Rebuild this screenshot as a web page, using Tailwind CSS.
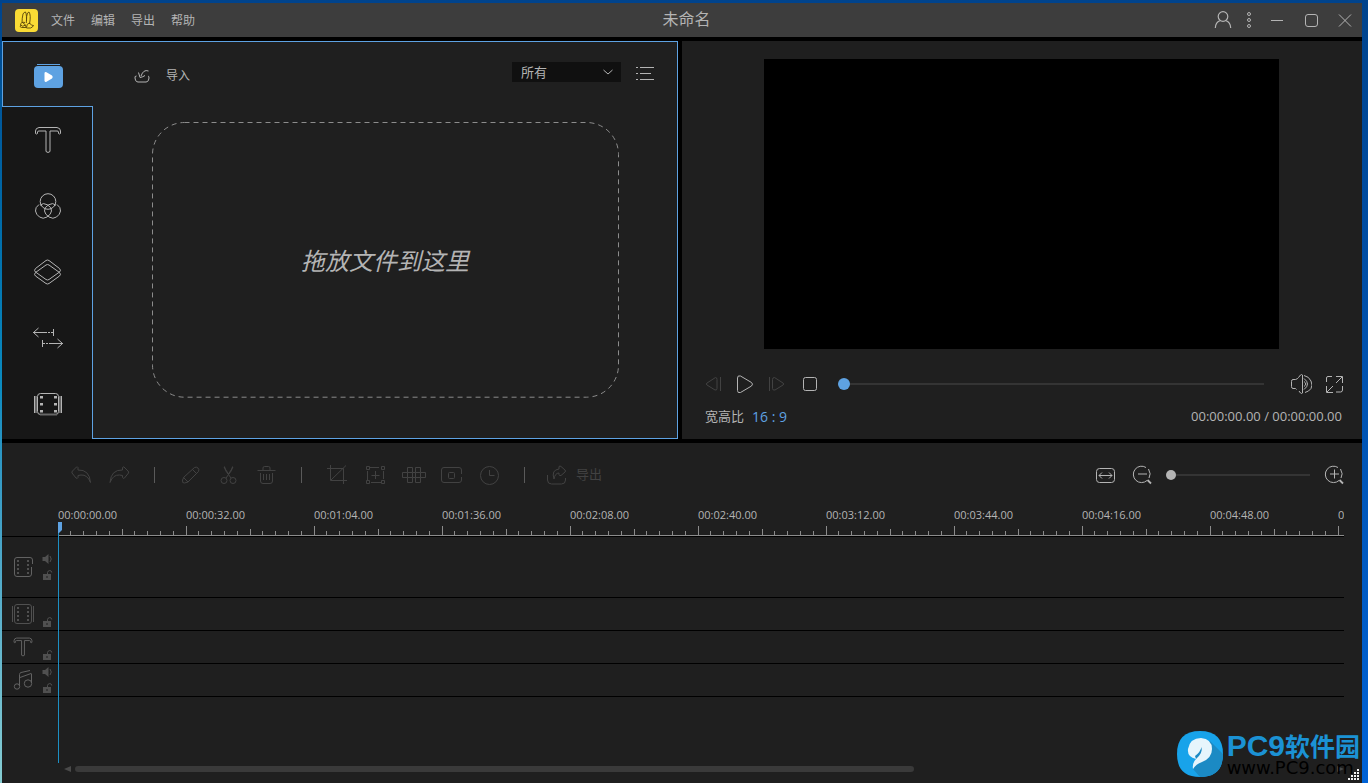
<!DOCTYPE html>
<html lang="zh-CN">
  <head>
    <meta charset="UTF-8" />
    <meta name="viewport" content="width=device-width, initial-scale=1.0" />
    <title>未命名</title>
    <script src="https://cdn.jsdelivr.net/npm/@tailwindcss/browser@4"></script>
  </head>
  <body
    class="flex h-screen overflow-hidden bg-linear-to-b from-[#00438c] to-[#0062d6] pt-[3px] pr-1.5 font-['Open_Sans','Noto_Sans_CJK_SC',sans-serif] text-[#b4b4b4]"
  >
    <!-- shared icons -->
    <svg class="hidden">
      <symbol id="icon-text" viewBox="0 0 28 28">
        <path d="M5 1.5h18q3.500 .5 3.500 3.500v2.500q-1 1-2 0v-1.500q0-1-1.500-1h-7v20.500q-2 2-4 0V5H5q-1.500 0-1.500 1v1.500q-1 1-2 0V5q0-3 3.500-3.500z" />
      </symbol>
      <symbol id="icon-speaker" viewBox="0 0 12 10">
        <path d="M1.500 3h2.500l3.500-3v10l-3.500-3h-2.500z" fill="currentColor" stroke="none" />
        <path d="M9 2q2.500 3 0 6" />
      </symbol>
      <symbol id="icon-lock" viewBox="0 0 12 10">
        <path d="M2 4h8v6h-8z" fill="currentColor" stroke="none" />
        <path d="M6.500 4v-1.500q.5-2 2.250-2t2 2" />
        <path d="M6 6v2" stroke="#1f1f1f" />
      </symbol>
    </svg>

    <div class="-mt-[3px] w-0.5 shrink-0 bg-linear-to-b from-[#00438c] via-[#0c8cc0] to-[#85ccd2]"></div>

    <main class="relative flex min-w-0 flex-1 flex-col bg-black">
      <!-- title bar -->
      <header class="mb-1 flex h-[34px] shrink-0 items-center bg-[#3d3d3d]">
        <div class="flex flex-1 items-center pl-3">
          <svg class="mr-[13px] size-6" viewBox="0 0 24 24" fill="none" stroke="#57430a">
            <rect x="1" y="1" width="23" height="23" rx="4" fill="#fadb35" stroke="none" />
            <path d="M8 15q0-5 1-9q1-2 2.500-2q1.500 3 .8 11M12.500 13q-.2-5 1-8l1.500-1q2.200 3 .5 12" stroke-width=".9" />
            <path d="M11 14.500q-4-1-4.500 2.500q2 2.500 5 0l-3-2.500M7 17q-2 2 .5 2.500h5l-1.500-2.500M12.500 19.500q0-4 3-4.500q2 3 4 2.500q-1 2-3 2.500h-4" stroke-width=".9" />
          </svg>
          <nav class="flex gap-4 pt-0.5 text-xs">
            <button>文件</button>
            <button>编辑</button>
            <button>导出</button>
            <button>帮助</button>
          </nav>
        </div>
        <h1 class="pr-0 pb-0.5 pl-1.5 text-base">未命名</h1>
        <div class="flex flex-1 items-center justify-end pr-[9px]">
          <button aria-label="账户" class="mr-[13px]">
            <svg class="size-5" viewBox="0 0 20 20" fill="none" stroke="currentColor" stroke-width="1.200">
              <circle cx="11" cy="6.500" r="4.800" />
              <path d="M8.500 10.500Q3.500 12 3.300 18M13.500 10.500Q18.500 12 18.700 18" />
            </svg>
          </button>
          <button aria-label="更多" class="mr-4">
            <svg class="h-5 w-2" viewBox="0 0 8 20" fill="none" stroke="currentColor">
              <circle cx="4" cy="4" r="1.500" />
              <circle cx="4" cy="10" r="1.500" />
              <circle cx="4" cy="16" r="1.500" />
            </svg>
          </button>
          <button aria-label="最小化" class="mr-[19px]">
            <svg class="size-4" viewBox="0 0 16 16" stroke="currentColor"><path d="M2 8.500h12" /></svg>
          </button>
          <button aria-label="最大化" class="mr-[17px]">
            <svg class="size-4" viewBox="0 0 16 16" fill="none" stroke="currentColor">
              <rect x="1.500" y="2.500" width="12" height="12" rx="2.500" />
            </svg>
          </button>
          <button aria-label="关闭">
            <svg class="size-4" viewBox="0 0 16 16" stroke="currentColor"><path d="M2 2.500l12 12M14 2.500l-12 12" /></svg>
          </button>
        </div>
      </header>

      <div class="mb-1 grid shrink-0 grid-cols-[676fr_680fr] gap-1">
        <!-- media library -->
        <section class="flex bg-[#1f1f1f]">
          <nav class="flex w-[91px] flex-col">
            <button aria-label="媒体" class="flex h-[66px] items-center justify-center border-y border-l border-[#5ea2e2] pt-0.5">
              <svg class="h-7 w-8" viewBox="0 0 32 28" fill="none">
                <path d="M5 3.500h23" stroke="#5ea2e2" />
                <rect x="2" y="5" width="29" height="22" rx="4" fill="#5ea2e2" />
                <path d="M12.500 12.500q0-2 2-1.200l5.500 3.200q1.500 1.500 0 3l-5.500 3.200q-2 .8-2-1.200z" fill="#fff" />
              </svg>
            </button>
            <div class="flex flex-1 flex-col border-r border-[#5ea2e2] bg-[#171717] pl-0.5">
              <button aria-label="文字" class="flex h-[66px] items-center justify-center">
                <svg class="size-7" fill="none" stroke="currentColor"><use href="#icon-text" /></svg>
              </button>
              <button aria-label="滤镜" class="flex h-[66px] items-center justify-center">
                <svg class="size-7" viewBox="0 0 28 28" fill="none" stroke="currentColor">
                  <circle cx="14" cy="9.500" r="7.800" />
                  <path d="M5 12.500q-4 3-3.500 6.500t4 6t7.500 0t4.500-6t-4-6.200t-7.500 .5" />
                  <path d="M23 12.500q4 3 3.500 6.500t-4 6t-7.500 0t-4.500-6t4-6.200t7.500 .5" />
                </svg>
              </button>
              <button aria-label="叠加" class="flex h-[66px] items-center justify-center">
                <svg class="size-7" viewBox="0 0 28 28" fill="none" stroke="currentColor">
                  <path d="M12 2.500q1.500-1 3 0L25.500 10.500q2 2 0 3.500L15 21.500q-1.500 1-3 0L1.500 14q-2-1.500 0-3.500z" />
                  <path d="M12 7q1.500-1 3 0L25.500 14.500q2 2 0 3.500L15 25.500q-1.500 1-3 0L1.500 18q-2-1.500 0-3.500z" />
                </svg>
              </button>
              <button aria-label="转场" class="flex h-[66px] items-center justify-center">
                <svg class="h-6 w-8" viewBox="0 0 32 24" fill="none" stroke="currentColor">
                  <path d="M6.500 2l-5 4.500l5 4.500M1 6.500h12M21.500 3v7M25.500 13l5 4.500l-5 4.500M31 17.500h-12M10.500 14v7" />
                  <path d="M13 6.500h8M11 17.500h8" stroke-dasharray="2 1" />
                </svg>
              </button>
              <button aria-label="元素" class="flex h-[66px] items-center justify-center">
                <svg class="h-6 w-8" viewBox="0 0 32 24" fill="none" stroke="currentColor">
                  <rect x="5.500" y="1.500" width="21" height="21" rx="3" />
                  <path d="M4 4v17M28 4v17M8 22.500h17" stroke="#666" stroke-width="2" />
                  <path d="M2.500 4v17M29.500 4v17" />
                  <path d="M8 4h3v2.500h-3zM8 11h3v2.500h-3zM8 18h3v2.500h-3zM22 4h3v2.500h-3zM22 11h3v2.500h-3zM22 18h3v2.500h-3z" fill="currentColor" stroke="none" />
                </svg>
              </button>
            </div>
          </nav>

          <div class="flex flex-1 flex-col border-y border-r border-[#5ea2e2]">
            <div class="mb-[18px] flex h-[62px] items-center pr-[23px] pl-[41px]">
              <button class="flex items-center gap-4 pt-1.5 text-xs">
                <svg class="size-4" viewBox="0 0 16 16" fill="none" stroke="currentColor">
                  <path d="M2.500 8q-2 0-1.500 2l.5 2q.5 2 2.500 2h8q2 0 2.500-2l.5-2q0-2-1-2" />
                  <path d="M14.500 3q-5-2-7.500 5M4.500 4.500l1.500 5q3-.5 5-2" />
                </svg>
                导入
              </button>
              <div class="relative ml-auto pb-0.5">
                <select aria-label="媒体类型" class="block h-5 w-[109px] appearance-none bg-[#101010] pl-[9px] text-[13px] leading-5">
                  <option>所有</option>
                </select>
                <svg class="pointer-events-none absolute top-1.5 right-2 h-2 w-2.5" viewBox="0 0 10 8" fill="none" stroke="currentColor">
                  <path d="M.5 2l4.500 4l4.500-4" />
                </svg>
              </div>
              <button aria-label="列表视图" class="ml-[15px]">
                <svg class="h-4 w-[18px]" viewBox="0 0 18 16" stroke="currentColor">
                  <path d="M0 2.500h2M4 2.500h14M0 8.500h2M4 8.500h11M0 14.500h2M4 14.500h14" />
                </svg>
              </button>
            </div>
            <div class="relative mr-[59px] mb-[41px] ml-[59px] flex flex-1 items-center justify-center">
              <svg class="absolute inset-0 size-full overflow-visible" fill="none" stroke="#8c8c8c">
                <rect x=".5" y=".5" width="100%" height="100%" rx="32" stroke-dasharray="5 4" />
              </svg>
              <p class="pt-1 text-2xl italic">拖放文件到这里</p>
            </div>
          </div>
        </section>

        <!-- preview -->
        <section class="bg-[#1f1f1f] pt-[18px] pb-3">
          <div class="mr-[83px] ml-[82px] aspect-video bg-black"></div>
          <div class="mt-[23px] flex h-6 items-center pr-[18px] pl-[21px]">
            <button aria-label="上一帧" class="text-[#424242]">
              <svg class="size-5" viewBox="0 0 20 20" fill="none" stroke="currentColor">
                <path d="M12.500 3.500q1.500 0 1.500 2v9q0 2-2 1.500l-8-5q-1.500-1 0-2zM17.500 3v14" />
              </svg>
            </button>
            <button aria-label="播放" class="ml-3">
              <svg class="size-5" viewBox="0 0 20 20" fill="none" stroke="currentColor">
                <path d="M2.500 4q0-3 3-2l11 6.500q2 1.500 0 3.500l-11 6.500q-3 1-3-2z" />
              </svg>
            </button>
            <button aria-label="下一帧" class="ml-3 text-[#424242]">
              <svg class="size-5" viewBox="0 0 20 20" fill="none" stroke="currentColor">
                <path d="M7.500 3.500q-2 0-2 2v9q0 2 2.500 1.500l8-5q1.500-1 0-2zM2.500 3v14" />
              </svg>
            </button>
            <button aria-label="停止" class="ml-[15px]">
              <svg class="size-4" viewBox="0 0 16 16" fill="none" stroke="currentColor">
                <rect x="1.500" y="1.500" width="13" height="13" rx="2" />
              </svg>
            </button>
            <input
              type="range"
              value="0"
              aria-label="播放进度"
              class="ml-5 h-3 min-w-0 flex-1 appearance-none bg-transparent [&::-webkit-slider-runnable-track]:h-0.5 [&::-webkit-slider-runnable-track]:bg-[#343434] [&::-webkit-slider-thumb]:-mt-[5px] [&::-webkit-slider-thumb]:size-3 [&::-webkit-slider-thumb]:appearance-none [&::-webkit-slider-thumb]:rounded-full [&::-webkit-slider-thumb]:bg-[#5ea2e2]"
            />
            <button aria-label="音量" class="ml-6">
              <svg class="size-6" viewBox="0 0 24 24" fill="none" stroke="currentColor">
                <path d="M8.500 17.500l-1-1H5q-1.500 0-1.500-2v-5q0-2 1.500-2h2.500q2-.5 3-2l2-2.500q1-1 2 0v18q-1 1-2 0l-1.500-2" />
                <path d="M16 9.500q3.500 2.500 0 5M16 6.500q7 5.500 0 11M16 3.500q5 1 7 5.500t0 7.500t-6 4" />
              </svg>
            </button>
            <button aria-label="全屏" class="ml-3">
              <svg class="size-5" viewBox="0 0 20 20" fill="none" stroke="currentColor">
                <path d="M2.500 8V4q0-1.500 1.500-1.500h4M12 2.500h6.500V9M18.500 12v4q0 2-2 2H12M9 18.500H2.500V12M3 18l6-6M18 3l-6 6" />
              </svg>
            </button>
          </div>
          <div class="mt-[11px] flex h-5 items-center pr-5 pl-[23px] text-[13px]">
            <span>宽高比</span>
            <button class="ml-2 text-sm leading-5 text-[#5ea2e2]">16 : 9</button>
            <time class="ml-auto">00:00:00.00 / 00:00:00.00</time>
          </div>
        </section>
      </div>

      <!-- timeline -->
      <section class="relative flex flex-1 flex-col bg-[#1f1f1f]">
        <div class="flex h-16 shrink-0 items-center pr-4 pl-[67px]">
          <div class="flex items-center gap-3.5 text-[#424242]">
            <button aria-label="撤销">
              <svg class="size-6" viewBox="0 0 24 24" fill="none" stroke="currentColor">
                <path d="M9 12.500v2q-.5 1.500-2 .5L3 10q-.5-1 .5-2l4-4q1-.5 1.500 .5v2.500q11.500-.5 12.500 12.500q-3-8-9.500-7.500z" />
              </svg>
            </button>
            <button aria-label="重做">
              <svg class="size-6" viewBox="0 0 24 24" fill="none" stroke="currentColor">
                <path d="M15.500 12.500v2q.5 1.500 2 .5L21.500 10q.5-1-.5-2l-4-4q-1-.5-1.500 .5v2.500Q4 6.500 3 19.500q3-8 9.500-7.500z" />
              </svg>
            </button>
            <span class="mx-[9px] h-4 w-px bg-[#5a5a5a]"></span>
            <button aria-label="编辑">
              <svg class="size-6" viewBox="0 0 24 24" fill="none" stroke="currentColor">
                <path d="M4.500 17l1.500-3L16.500 4.500q2-1 3.500 .5t.5 3.500L10 19l-3.500 1q-2.500 .5-2-3zM14.500 6.500l4 4M5.500 14.500l4.500 4.500" />
              </svg>
            </button>
            <button aria-label="分割">
              <svg class="size-6" viewBox="0 0 24 24" fill="none" stroke="currentColor">
                <path d="M8.500 3.500l1 4l5.500 7.500M16.500 3.500l-1 4l-5.500 7.500M8 4l4.500 7M17 4l-4.500 7" />
                <circle cx="8" cy="17.500" r="3" />
                <circle cx="17" cy="17.500" r="3" />
              </svg>
            </button>
            <button aria-label="删除">
              <svg class="size-6" viewBox="0 0 24 24" fill="none" stroke="currentColor">
                <path d="M3.500 7.500h18M9 7V5q0-1.500 1.500-1.500h4q1.500 0 1.500 1.500v2M6.500 10v8q0 2.500 2.500 2.500h7q2.500 0 2.500-2.500v-8M9.500 11v6M12.500 11v6M15.500 11v6" />
              </svg>
            </button>
            <span class="mx-[9px] h-4 w-px bg-[#5a5a5a]"></span>
            <button aria-label="裁剪">
              <svg class="size-6" viewBox="0 0 24 24" fill="none" stroke="currentColor">
                <path d="M5.500 2v15.500H22M2 5.500h16.500V21M6 17L21 2.500" />
              </svg>
            </button>
            <button aria-label="缩放">
              <svg class="size-6" viewBox="0 0 24 24" fill="none" stroke="currentColor">
                <path d="M3.500 3.500h3v3h-3zM18.500 3.500h3v3h-3zM3.500 17.500h3v3h-3zM18.500 17.500h3v3h-3zM7 4.500h9M8 19.500h10M4.500 8v9M20.500 8v8M12.500 8v8M8.500 12.500h8" />
              </svg>
            </button>
            <button aria-label="马赛克">
              <svg class="size-6 overflow-visible" viewBox="0 0 24 24" fill="none" stroke="currentColor">
                <path d="M6.500 4.500h5v5h-5zM14.500 4.500h5v5h-5zM6.500 14.500h5v5h-5zM14.500 14.500h5v5h-5zM1.500 9.500h5v5h-5zM11.500 9.500h3v5h-3zM19.500 9.500h5v5h-5z" />
              </svg>
            </button>
            <button aria-label="定格">
              <svg class="size-6" viewBox="0 0 24 24" fill="none" stroke="currentColor">
                <path d="M22.500 11V7q0-2.500-2.500-2.500H5Q2.500 4.500 2.500 7v10q0 2.500 2.500 2.500h15q2.500 0 2.500-2.500v-3" />
                <rect x="9.500" y="9.500" width="6" height="6" rx="1" />
              </svg>
            </button>
            <button aria-label="时长">
              <svg class="size-6" viewBox="0 0 24 24" fill="none" stroke="currentColor">
                <circle cx="12.500" cy="12.500" r="9" />
                <path d="M12.500 7v5.500h5" />
              </svg>
            </button>
            <span class="mx-[9px] h-4 w-px bg-[#5a5a5a]"></span>
            <button class="flex items-center gap-2 text-[13px]">
              <svg class="size-5 overflow-visible" viewBox="0 0 20 20" fill="none" stroke="currentColor">
                <path d="M-.5 10v5q0 4 4 4h10q4 0 4-4v-2" />
                <path d="M6 14q-3-9 5-10V1.500q1-1 2 0l4 3.500q1 1 0 2l-4 3.500q-2 .5-2-1V8q-4 0-5 6z" />
              </svg>
              导出
            </button>
          </div>
          <div class="ml-auto flex items-center gap-3">
            <button aria-label="适应窗口">
              <svg class="size-6" viewBox="0 0 24 24" fill="none" stroke="currentColor">
                <rect x="2.500" y="5.500" width="18" height="14" rx="3" />
                <path d="M5 12.500h13M8 9.500l-3 3l3 3M15 9.500l3 3l-3 3" />
              </svg>
            </button>
            <button aria-label="缩小">
              <svg class="size-6" viewBox="0 0 24 24" fill="none" stroke="currentColor">
                <path d="M16 4.500A8.200 8.200 0 1 0 17 17.500M18.500 6q3 5 .5 9M8 11h9" />
                <path d="M17.500 17l3.500 3.500" stroke-width="1.800" />
              </svg>
            </button>
            <input
              type="range"
              value="0"
              aria-label="时间线缩放"
              class="h-2.5 w-[144px] appearance-none bg-transparent [&::-webkit-slider-runnable-track]:h-0.5 [&::-webkit-slider-runnable-track]:bg-[#343434] [&::-webkit-slider-thumb]:-mt-1 [&::-webkit-slider-thumb]:size-2.5 [&::-webkit-slider-thumb]:appearance-none [&::-webkit-slider-thumb]:rounded-full [&::-webkit-slider-thumb]:bg-[#b4b4b4]"
            />
            <button aria-label="放大">
              <svg class="size-6" viewBox="0 0 24 24" fill="none" stroke="currentColor">
                <path d="M16 4.500A8.200 8.200 0 1 0 17 17.500M18.500 6q3 5 .5 9M8 11h9M12.500 6.500v9" />
                <path d="M17.500 17l3.500 3.500" stroke-width="1.800" />
              </svg>
            </button>
          </div>
        </div>

        <div class="relative mr-[18px] flex flex-1 flex-col">
          <!-- ruler -->
          <div class="ml-14 overflow-hidden">
            <div id="ruler" class="flex h-[19px] text-[11px] leading-4"></div>
            <svg class="h-[10px] w-full" shape-rendering="crispEdges">
              <pattern id="ticks" width="128" height="10" patternUnits="userSpaceOnUse">
                <path
                  d="M.5 0v9M12.500 5v4M25.500 5v4M38.500 5v4M51.500 5v4M64.500 3v6M76.500 5v4M89.500 5v4M102.500 5v4M115.500 5v4M0 9.500h128"
                  stroke="#8c8c8c"
                />
              </pattern>
              <rect width="100%" height="10" fill="url(#ticks)" />
            </svg>
          </div>

          <!-- tracks -->
          <div class="border-t border-black text-[#505050]">
            <div class="flex h-[61px] items-center gap-[7px] border-b border-black pl-2.5">
              <svg class="size-[22px]" viewBox="0 0 22 22" fill="none" stroke="currentColor">
                <path d="M20.500 8V4q0-2.500-2.500-2.500H5Q2.500 1.500 2.500 4v14q0 2.500 2.500 2.500h12q2.500 0 2.500-2.500v-7" stroke="#626262" />
                <path d="M6 4v14M16 4v14" stroke-width="2" stroke-dasharray="2 2" />
              </svg>
              <div class="flex h-[26px] flex-col justify-end gap-1.5">
                <button aria-label="静音"><svg class="block h-2.5 w-3" fill="none" stroke="currentColor"><use href="#icon-speaker" /></svg></button>
                <button aria-label="锁定"><svg class="block h-2.5 w-3" fill="none" stroke="currentColor"><use href="#icon-lock" /></svg></button>
              </div>
            </div>
            <div class="flex h-[33px] items-center gap-[7px] border-b border-black pl-2.5">
              <svg class="size-[22px]" viewBox="0 0 22 22" fill="none" stroke="currentColor">
                <rect x="2.500" y="1.500" width="17" height="19" rx="2.500" />
                <path d="M.5 3v16M21.500 3v16" />
                <path d="M6 4v14M16 4v14" stroke-width="2" stroke-dasharray="2 2" />
              </svg>
              <div class="flex h-[26px] flex-col justify-end">
                <button aria-label="锁定"><svg class="block h-2.5 w-3" fill="none" stroke="currentColor"><use href="#icon-lock" /></svg></button>
              </div>
            </div>
            <div class="flex h-[33px] items-center gap-[7px] border-b border-black pl-2.5">
              <svg class="h-5 w-[22px]" fill="none" stroke="#626262" stroke-width="1.400"><use href="#icon-text" /></svg>
              <div class="flex h-[26px] flex-col justify-end">
                <button aria-label="锁定"><svg class="block h-2.5 w-3" fill="none" stroke="currentColor"><use href="#icon-lock" /></svg></button>
              </div>
            </div>
            <div class="flex h-[33px] items-center gap-[7px] border-b border-black pl-2.5">
              <svg class="size-[22px]" viewBox="0 0 22 22" fill="none" stroke="#626262">
                <circle cx="5" cy="17.500" r="2.700" />
                <circle cx="16" cy="14.500" r="3.700" />
                <path d="M7.500 17V5.500q0-1.500 1.500-2l9-2M19.500 14V4.500M8 8.500l11-4" />
              </svg>
              <div class="flex h-[26px] flex-col justify-end gap-1.5">
                <button aria-label="静音"><svg class="block h-2.5 w-3" fill="none" stroke="currentColor"><use href="#icon-speaker" /></svg></button>
                <button aria-label="锁定"><svg class="block h-2.5 w-3" fill="none" stroke="currentColor"><use href="#icon-lock" /></svg></button>
              </div>
            </div>
          </div>

          <!-- horizontal scrollbar -->
          <div class="mt-auto mb-[11px] ml-[62px] flex items-center gap-1">
            <svg class="h-1.5 w-[7px]" viewBox="0 0 7 6" fill="#4a4a4a"><path d="M7 0v6L0 3z" /></svg>
            <div class="h-1.5 flex-1"><div class="h-full w-2/3 rounded-full bg-[#3a3a3a]"></div></div>
            <svg class="h-1.5 w-[7px]" viewBox="0 0 7 6" fill="#4a4a4a"><path d="M0 0v6l7-3z" /></svg>
          </div>

          <!-- playhead -->
          <div class="absolute top-[15px] bottom-5 left-14 w-px bg-[#1c8fc4]">
            <svg class="h-[11px] w-1" viewBox="0 0 4 11" fill="#5ea2e2"><path d="M0 0h4v8l-3 3h-1z" /></svg>
          </div>
        </div>
      </section>

      <!-- site mark -->
      <div class="absolute right-0.5 bottom-1.5 flex items-center gap-1">
        <svg class="size-[46px]" viewBox="0 0 46 46">
          <path d="M23 0Q46 0 46 23T23 46T0 23T23 0z" fill="#18a3ea" />
          <path d="M33 10L46 23Q46 46 23 46L16 38z" fill="#1b8ac4" />
          <path d="M16 38q-1-6 3-10q-9-2-8-10q2-11 13-11q11 1 11 11q0 9-10 13q-6 2-9 7z" fill="#e6f5fc" />
          <path d="M19 28q7-6 5.500-12q-1 5-6.500 9" fill="#1b8ac4" />
        </svg>
        <div>
          <p class="flex items-center font-bold text-[#1b92d4]">
            <span class="font-['Liberation_Sans',sans-serif] text-3xl leading-7">PC9</span>
            <span class="text-[25px] leading-7">软件园</span>
          </p>
          <p class="font-['DejaVu_Sans',sans-serif] text-lg leading-4 text-black">www.PC9.com</p>
        </div>
      </div>
      <svg class="absolute right-0.5 bottom-0.5 size-3" viewBox="0 0 12 12" fill="#f0f0f0">
        <path d="M9 0h2v2h-2zM6 3h2v2h-2zM9 3h2v2h-2zM3 6h2v2h-2zM6 6h2v2h-2zM9 6h2v2h-2zM0 9h2v2h-2zM3 9h2v2h-2zM6 9h2v2h-2zM9 9h2v2h-2z" />
      </svg>
    </main>

    <script>
      // one label every 32 seconds
      const ruler = document.querySelector("#ruler");
      const pad = (n) => String(n).padStart(2, "0");

      for (let s = 0; s <= 320; s += 32) {
        const label = document.createElement("span");
        label.className = "w-32 shrink-0";
        label.innerText = `00:${pad(Math.floor(s / 60))}:${pad(s % 60)}.00`;
        ruler.appendChild(label);
      }
    </script>
  </body>
</html>
